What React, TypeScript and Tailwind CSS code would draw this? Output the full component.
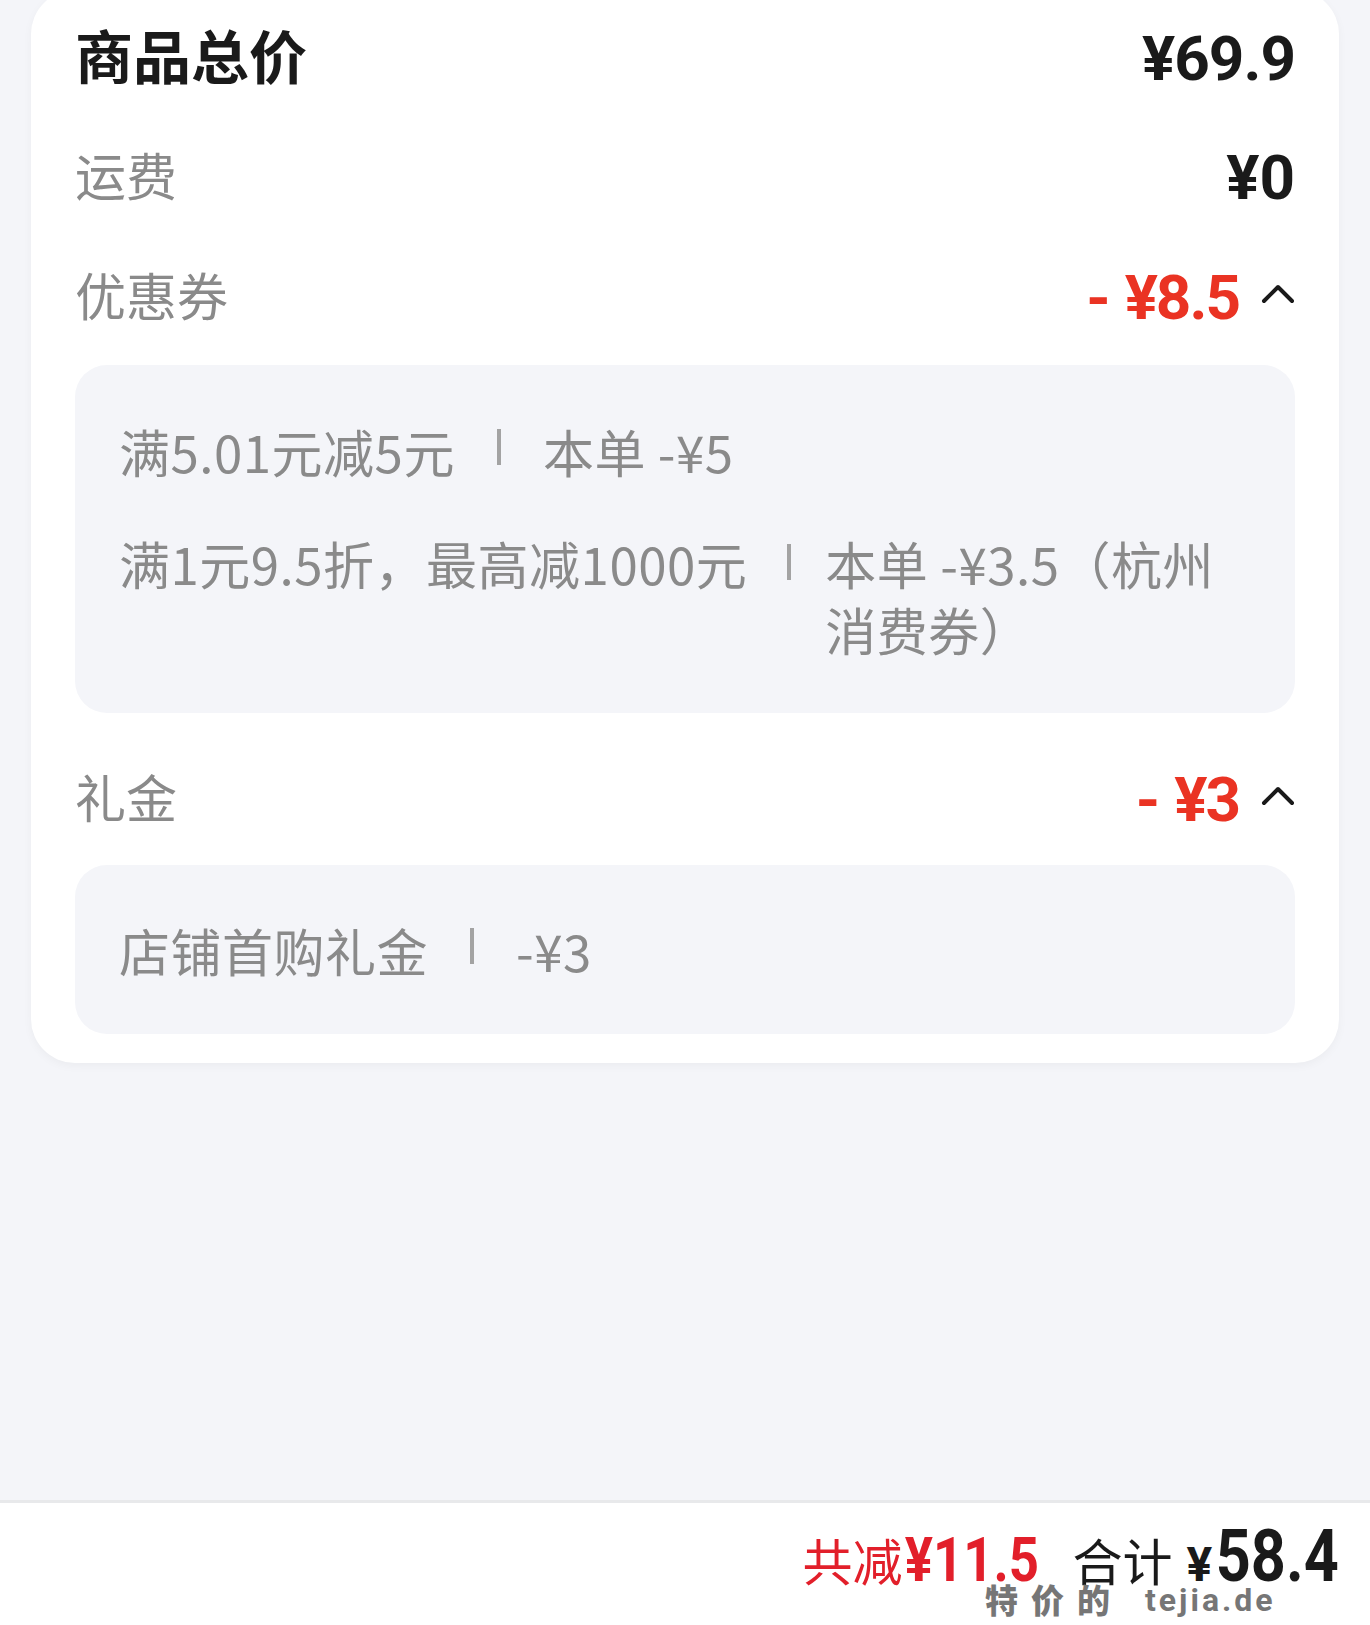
import React from "react";

const CJK = { fontFamily: '"Noto Sans CJK SC", "Noto Sans", sans-serif' };
const NUM = { fontFamily: '"Roboto", "Noto Sans CJK SC", sans-serif' };

function Chevron() {
  return (
    <svg width="34" height="20" viewBox="0 0 34 20" className="ml-[22px] shrink-0">
      <path d="M3 17 L17 3 L31 17" fill="none" stroke="#1a1a1a" strokeWidth="4" strokeLinecap="round" strokeLinejoin="round" />
    </svg>
  );
}

function Sep() {
  return <span className="mx-[42px] mt-[-8px] inline-block h-[36px] w-[4px] shrink-0 bg-[#a3a3a3]" />;
}

function RedAmount({ value }: { value: string }) {
  return (
    <div className="flex items-center pt-[8px] text-[#ea3323]" style={NUM}>
      <span className="text-[62px] font-bold leading-none">-</span>
      <span className="ml-[14px] text-[62px] font-bold leading-none tracking-[-2px]">{value}</span>
    </div>
  );
}

export default function App() {
  return (
    <div className="relative flex h-[1625px] w-[1370px] flex-col overflow-hidden bg-[#f4f5f9]" style={CJK}>
      <div className="mx-[31px] -mt-[10px] rounded-[44px] bg-white px-[44px] pb-[29px] pt-[4px] shadow-[0_3px_10px_rgba(0,0,0,0.04)]">
        <div className="flex h-[120px] items-center justify-between">
          <span className="text-[58px] font-bold leading-none text-[#1a1a1a]">商品总价</span>
          <span className="pt-[10px] text-[62px] font-bold leading-none tracking-[-1px] text-[#1a1a1a]" style={NUM}>¥69.9</span>
        </div>
        <div className="flex h-[120px] items-center justify-between">
          <span className="text-[51px] leading-none text-[#8a8a8a]">运费</span>
          <span className="pt-[8px] text-[62px] font-bold leading-none text-[#1a1a1a]" style={NUM}>¥0</span>
        </div>
        <div className="flex h-[120px] items-center justify-between">
          <span className="text-[51px] leading-none text-[#8a8a8a]">优惠券</span>
          <div className="flex items-center">
            <RedAmount value="¥8.5" />
            <Chevron />
          </div>
        </div>
        <div className="mt-[11px] flex flex-col gap-[46px] rounded-[32px] bg-[#f4f5f9] pb-[51px] pl-[44px] pr-[60px] pt-[53px] text-[51px] leading-[66px] tracking-[0.5px] text-[#8a8a8a]">
          <div className="flex items-center">
            <span className="shrink-0">满5.01元减5元</span>
            <Sep />
            <span>本单 -¥5</span>
          </div>
          <div className="flex items-start">
            <span className="shrink-0">满1元9.5折，最高减1000元</span>
            <span className="ml-[40px] mr-[34px] mt-[14px] inline-block h-[36px] w-[4px] shrink-0 bg-[#a3a3a3]" />
            <span className="min-w-0 flex-1">本单 -¥3.5（杭州消费券）</span>
          </div>
        </div>
        <div className="mt-[23px] flex h-[120px] items-center justify-between">
          <span className="text-[51px] leading-none text-[#8a8a8a]">礼金</span>
          <div className="flex items-center">
            <RedAmount value="¥3" />
            <Chevron />
          </div>
        </div>
        <div className="mt-[9px] flex items-center rounded-[32px] bg-[#f4f5f9] px-[44px] pb-[51px] pt-[52px] text-[51px] leading-[66px] tracking-[0.5px] text-[#8a8a8a]">
          <span className="shrink-0">店铺首购礼金</span>
          <Sep />
          <span>-¥3</span>
        </div>
      </div>

      <div className="flex-1" />

      <div className="relative h-[125px] border-t-[3px] border-[#e8e9eb] bg-white">
        <div className="flex items-baseline justify-end pr-[31px] pt-[18px]">
          <span className="text-[50px] leading-none text-[#e21f2a]">共减</span>
          <span className="-ml-[22px] inline-block origin-right scale-x-[0.85] text-[62px] font-bold leading-none text-[#e21f2a]" style={NUM}>¥11.5</span>
          <span className="ml-[34px] text-[50px] leading-none text-[#1a1a1a]">合计</span>
          <span className="ml-[14px] text-[48px] font-bold leading-none text-[#1a1a1a]" style={NUM}>¥</span>
          <span className="-ml-[18px] inline-block origin-right scale-x-[0.85] text-[72px] font-bold leading-none text-[#1a1a1a]" style={NUM}>58.4</span>
        </div>
        <div className="absolute left-[985px] top-[80px] flex items-center leading-none text-[#767676]">
          <span className="text-[33px] font-black tracking-[13px]">特价的</span>
          <span className="ml-[22px] text-[32px] font-bold tracking-[3px]" style={NUM}>tejia.de</span>
        </div>
      </div>
    </div>
  );
}
